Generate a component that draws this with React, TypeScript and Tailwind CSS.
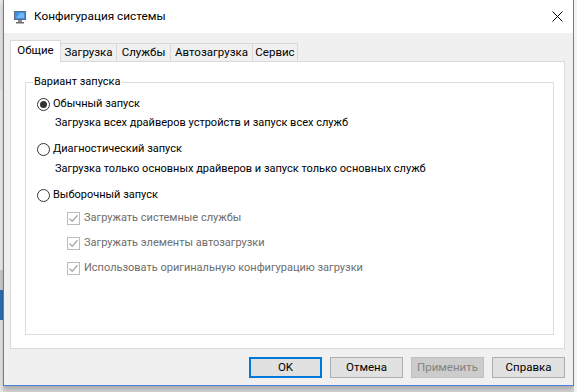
import React from "react";

const F = { fontFamily: 'Roboto, "Noto Sans", sans-serif' };

function Radio({ checked }: { checked?: boolean }) {
  return (
    <div className="w-[13px] h-[13px] rounded-full border border-[#333333] bg-white flex items-center justify-center shrink-0">
      {checked && <div className="w-[7px] h-[7px] rounded-full bg-[#333333]" />}
    </div>
  );
}

function Check() {
  return (
    <div className="w-[13px] h-[13px] border border-[#bcbcbc] bg-white flex items-center justify-center shrink-0">
      <svg width="11" height="11" viewBox="0 0 11 11">
        <path d="M1.5 5.5 L4.2 8.2 L9.5 2.2" fill="none" stroke="#a8a8a8" strokeWidth="1.3" />
      </svg>
    </div>
  );
}

function Btn({ children, primary, disabled }: { children: React.ReactNode; primary?: boolean; disabled?: boolean }) {
  const cls = primary
    ? "border-2 border-[#0078d7] bg-[#e1e1e1] text-black"
    : disabled
    ? "border border-[#bfbfbf] bg-[#cccccc] text-[#838383]"
    : "border border-[#adadad] bg-[#e1e1e1] text-black";
  return (
    <div className={`w-[73px] h-[21px] flex items-center justify-center text-[11.5px] ${cls}`}>{children}</div>
  );
}

export default function App() {
  return (
    <div className="w-[577px] h-[392px] bg-[#d9d9d9] flex overflow-hidden" style={F}>
      <div className="w-[3px] h-full bg-[#e9e9e9] flex flex-col">
        <div className="h-[90px]" />
        <div className="h-[180px] bg-[#f0f0f0]" />
        <div className="h-[20px] bg-[#cfcfcf]" />
        <div className="h-[30px] bg-[#2f6fb4]" />
      </div>
      <div className="w-[571px] h-[386px] border-x border-b border-[#4a7fdc] bg-[#f0f0f0] flex flex-col shadow-[0_3px_6px_rgba(0,0,0,0.25)]">
        <div className="h-[33px] bg-white flex items-center shrink-0">
          <svg className="ml-[9px]" width="14" height="14" viewBox="0 0 14 14">
            <rect x="1" y="1" width="12" height="9" fill="#5a6a8a" />
            <rect x="2" y="2" width="10" height="7" fill="#3f8fe0" />
            <path d="M3 8 L7 3 L11 3 L11 8 Z" fill="#7fc0f5" opacity="0.8" />
            <rect x="5" y="10" width="4" height="2" fill="#8a8a8a" />
            <rect x="3" y="12" width="8" height="1.5" fill="#6a6a6a" />
          </svg>
          <span className="ml-[7px] text-[11.8px] text-black">Конфигурация системы</span>
          <div className="flex-1" />
          <svg className="mr-[10px]" width="11" height="11" viewBox="0 0 11 11">
            <path d="M0.5 0.5 L10.5 10.5 M10.5 0.5 L0.5 10.5" stroke="#000" strokeWidth="1" />
          </svg>
        </div>
        <div className="flex-1 flex flex-col pt-[7px] pl-[6px] pr-[8px]">
          <div className="flex items-end h-[21px] text-[11.5px] text-black">
            <div className="w-[51px] h-[22px] -mb-px relative z-10 bg-white border border-b-0 border-[#d9d9d9] flex items-center justify-center pb-[2px]">Общие</div>
            <div className="w-[56px] h-[18px] border-t border-r border-[#d9d9d9] flex items-center justify-center">Загрузка</div>
            <div className="w-[54px] h-[18px] border-t border-r border-[#d9d9d9] flex items-center justify-center">Службы</div>
            <div className="w-[82px] h-[18px] border-t border-r border-[#d9d9d9] flex items-center justify-center">Автозагрузка</div>
            <div className="w-[45px] h-[18px] border-t border-r border-[#d9d9d9] flex items-center justify-center">Сервис</div>
          </div>
          <div className="w-[555px] h-[288px] bg-white border border-[#d9d9d9] pt-[20px] pl-[14px]">
            <div className="relative w-[529px] h-[253px] border border-[#dcdcdc] pl-[11px] text-[11px] text-black">
              <span className="absolute left-[7px] top-[-9px] bg-white px-[1px] leading-[16px]">Вариант запуска</span>
              <div className="h-[16px] mt-[13px] flex items-center gap-[3px]">
                <Radio checked />
                <span>Обычный запуск</span>
              </div>
              <div className="h-[16px] mt-[3px] ml-[18px] flex items-center">Загрузка всех драйверов устройств и запуск всех служб</div>
              <div className="h-[16px] mt-[10px] flex items-center gap-[3px]">
                <Radio />
                <span>Диагностический запуск</span>
              </div>
              <div className="h-[16px] mt-[4px] ml-[18px] flex items-center">Загрузка только основных драйверов и запуск только основных служб</div>
              <div className="h-[16px] mt-[10px] flex items-center gap-[3px]">
                <Radio />
                <span>Выборочный запуск</span>
              </div>
              <div className="h-[16px] mt-[7px] ml-[30px] flex items-center gap-[4px] text-[#6d6d6d]">
                <Check />
                <span>Загружать системные службы</span>
              </div>
              <div className="h-[16px] mt-[9px] ml-[30px] flex items-center gap-[4px] text-[#6d6d6d]">
                <Check />
                <span>Загружать элементы автозагрузки</span>
              </div>
              <div className="h-[16px] mt-[9px] ml-[30px] flex items-center gap-[4px] text-[#6d6d6d]">
                <Check />
                <span>Использовать оригинальную конфигурацию загрузки</span>
              </div>
            </div>
          </div>
          <div className="flex justify-end gap-[8px] mt-[8px] pr-[0px]">
            <Btn primary>OK</Btn>
            <Btn>Отмена</Btn>
            <Btn disabled>Применить</Btn>
            <Btn>Справка</Btn>
          </div>
        </div>
      </div>
      <div className="flex-1 h-full bg-[#f3f3f3]" />
    </div>
  );
}
